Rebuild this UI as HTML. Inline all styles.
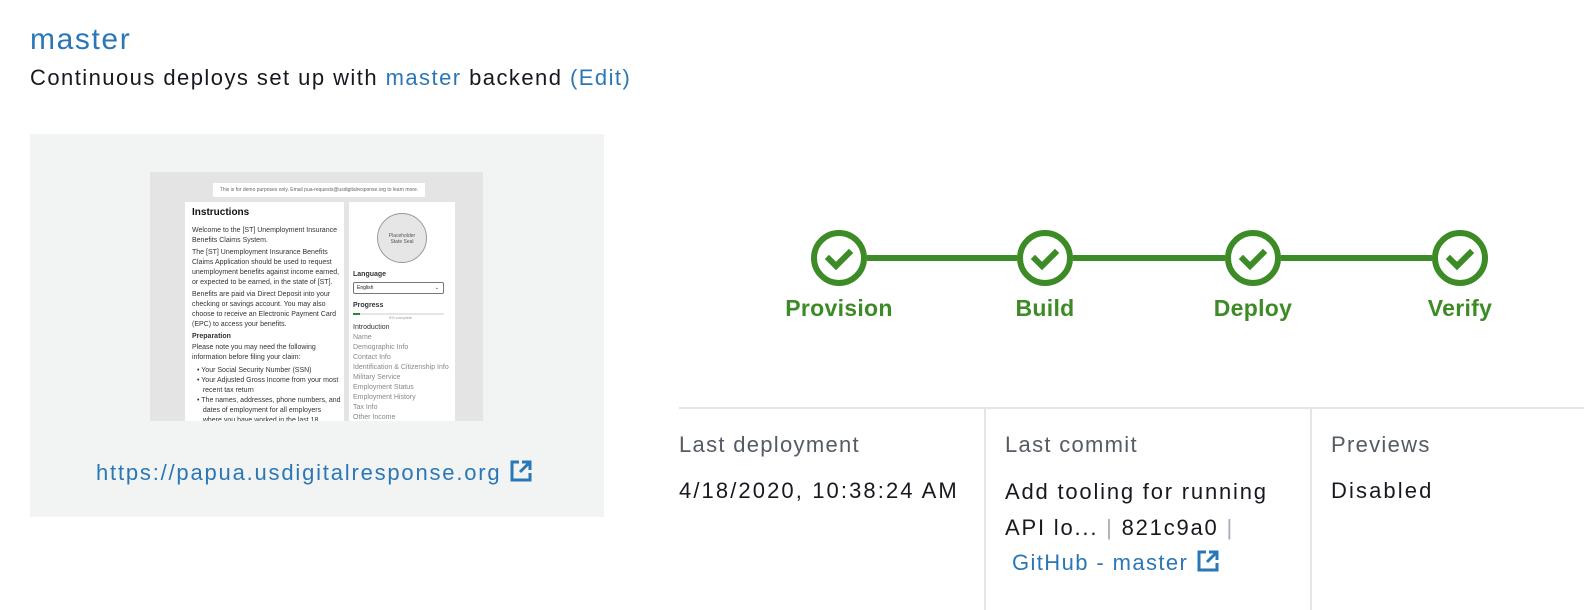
<!DOCTYPE html>
<html><head><meta charset="utf-8"><style>
*{margin:0;padding:0;box-sizing:border-box}
body{width:1584px;height:610px;background:#fff;font-family:"Liberation Sans",Arial,sans-serif;position:relative;overflow:hidden;color:#16191f}
.a{position:absolute;white-space:nowrap}
.link{color:#2a77b7}
.lab{color:#545b64;font-size:22px;letter-spacing:1.3px}
.val{font-size:22px;color:#16191f;letter-spacing:2.1px}
.m{position:absolute;font-size:7px;line-height:10px;color:#333;white-space:nowrap}
.g{color:#888}
.step{position:absolute;font-weight:bold;font-size:23px;color:#3d8b27;text-align:center;width:160px;top:295px;letter-spacing:0.3px}
svg.i{vertical-align:-3px;margin-left:8px}
</style></head><body>
<div class="a link" style="left:30px;top:23px;font-size:30px;letter-spacing:1.6px">master</div>
<div class="a" style="left:30px;top:65px;font-size:22px;letter-spacing:1.45px">Continuous deploys set up with <span class="link">master</span> backend <span class="link">(Edit)</span></div>

<div class="a" style="left:30px;top:134px;width:574px;height:383px;background:#f2f3f3"></div>
<div class="a" style="left:150px;top:172px;width:333px;height:249px;background:#e4e4e4;overflow:hidden">
  <div class="a" style="left:63px;top:11px;width:212px;height:14px;background:#fff;font-size:5px;line-height:14px;text-align:center;color:#666">This is for demo purposes only. Email pua-requests@usdigitalresponse.org to learn more.</div>
  <div class="a" style="left:35px;top:30px;width:159px;height:230px;background:#fff">
    <div class="m" style="left:7px;top:6px;font-size:10px;font-weight:bold;color:#111">Instructions</div>
    <div class="m" style="left:7px;top:24px">Welcome to the [ST] Unemployment Insurance<br>Benefits Claims System.</div>
    <div class="m" style="left:7px;top:46px">The [ST] Unemployment Insurance Benefits<br>Claims Application should be used to request<br>unemployment benefits against income earned,<br>or expected to be earned, in the state of [ST].</div>
    <div class="m" style="left:7px;top:88px">Benefits are paid via Direct Deposit into your<br>checking or savings account. You may also<br>choose to receive an Electronic Payment Card<br>(EPC) to access your benefits.</div>
    <div class="m" style="left:7px;top:130px;font-weight:bold">Preparation</div>
    <div class="m" style="left:7px;top:141px">Please note you may need the following<br>information before filing your claim:</div>
    <div class="m" style="left:12px;top:164px">• Your Social Security Number (SSN)<br>• Your Adjusted Gross Income from your most<br>&nbsp;&nbsp;&nbsp;recent tax return<br>• The names, addresses, phone numbers, and<br>&nbsp;&nbsp;&nbsp;dates of employment for all employers<br>&nbsp;&nbsp;&nbsp;where you have worked in the last 18<br>&nbsp;&nbsp;&nbsp;months.<br>• Your Alien Registration Number, if<br>&nbsp;&nbsp;&nbsp;applicable</div>
  </div>
  <div class="a" style="left:199px;top:30px;width:106px;height:230px;background:#fff">
    <div class="a" style="left:28px;top:11px;width:50px;height:50px;border-radius:50%;background:#e6e6e6;border:1px solid #999;font-size:5px;color:#555;text-align:center;padding-top:19px;line-height:6px">Placeholder<br>State Seal</div>
    <div class="m" style="left:4px;top:68px;font-weight:bold">Language</div>
    <div class="a" style="left:4px;top:80px;width:91px;height:12px;border:1px solid #777;border-radius:2px;font-size:5px;line-height:10px;padding-left:3px">English<span style="position:absolute;right:4px">⌄</span></div>
    <div class="m" style="left:4px;top:99px;font-weight:bold">Progress</div>
    <div class="a" style="left:4px;top:111px;width:91px;height:2px;background:#e5e5e5"><div style="width:7px;height:2px;background:#2e8540"></div></div>
    <div class="a" style="left:40px;top:113px;font-size:4px;color:#999">5% complete</div>
    <div class="m" style="left:4px;top:121px;color:#333">Introduction</div>
    <div class="m g" style="left:4px;top:131px">Name<br>Demographic Info<br>Contact Info<br>Identification &amp; Citizenship Info<br>Military Service<br>Employment Status<br>Employment History<br>Tax Info<br>Other Income</div>
  </div>
</div>
<div class="a link" style="left:96px;top:459px;font-size:22px;letter-spacing:1.8px">https://papua.usdigitalresponse.org<svg class="i" width="24" height="24" viewBox="0 0 24 24"><path d="M10 3H3v18h18v-7" fill="none" stroke="#2a77b7" stroke-width="3"/><path d="M13 3h8v8M21 3l-10 10" fill="none" stroke="#2a77b7" stroke-width="3"/></svg></div>

<svg class="a" style="left:0;top:0" width="1584" height="300">
 <g stroke="#3d8b27" fill="none">
  <line x1="867" y1="258" x2="1017" y2="258" stroke-width="6"/>
  <line x1="1073" y1="258" x2="1225" y2="258" stroke-width="6"/>
  <line x1="1281" y1="258" x2="1432" y2="258" stroke-width="6"/>
  <g stroke-width="6"><circle cx="839" cy="258" r="25"/><circle cx="1045" cy="258" r="25"/><circle cx="1253" cy="258" r="25"/><circle cx="1460" cy="258" r="25"/></g>
  <g stroke-width="6" stroke-linecap="square"><path d="M829 259l7 7 13-13"/><path d="M1035 259l7 7 13-13"/><path d="M1243 259l7 7 13-13"/><path d="M1450 259l7 7 13-13"/></g>
 </g>
</svg>
<div class="step" style="left:759px">Provision</div>
<div class="step" style="left:965px">Build</div>
<div class="step" style="left:1173px">Deploy</div>
<div class="step" style="left:1380px">Verify</div>

<div class="a" style="left:679px;top:407px;width:905px;height:2px;background:#e4e6e6"></div>
<div class="a" style="left:984px;top:409px;width:2px;height:201px;background:#e4e6e6"></div>
<div class="a" style="left:1310px;top:409px;width:2px;height:201px;background:#e4e6e6"></div>
<div class="a lab" style="left:679px;top:432px">Last deployment</div>
<div class="a val" style="left:679px;top:478px">4/18/2020, 10:38:24 AM</div>
<div class="a lab" style="left:1005px;top:432px">Last commit</div>
<div class="a val" style="left:1005px;top:474px;line-height:36px;letter-spacing:1.8px">Add tooling for running<br>API lo... <span style="color:#aab">|</span> 821c9a0 <span style="color:#aab">|</span></div>
<div class="a link" style="left:1012px;top:549px;font-size:22px;letter-spacing:1.4px">GitHub - master<svg class="i" width="24" height="24" viewBox="0 0 24 24"><path d="M10 3H3v18h18v-7" fill="none" stroke="#2a77b7" stroke-width="3"/><path d="M13 3h8v8M21 3l-10 10" fill="none" stroke="#2a77b7" stroke-width="3"/></svg></div>
<div class="a lab" style="left:1331px;top:432px">Previews</div>
<div class="a val" style="left:1331px;top:478px">Disabled</div>
</body></html>
